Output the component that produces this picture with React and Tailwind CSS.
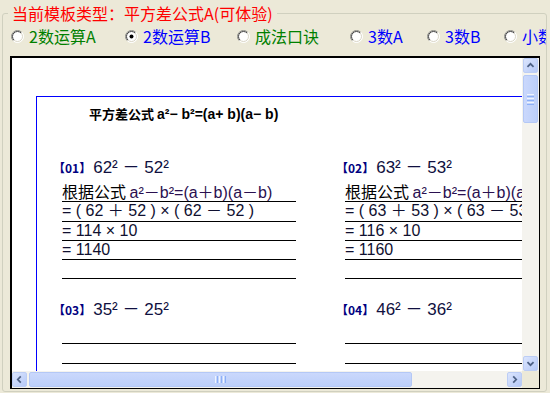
import React from 'react';

const radios = [
  { label: '2数运算A', color: 'text-[#008000]', w: 'w-[114px]', checked: false },
  { label: '2数运算B', color: 'text-[#0000FF]', w: 'w-[112px]', checked: true },
  { label: '成法口诀', color: 'text-[#008000]', w: 'w-[113px]', checked: false },
  { label: '3数A', color: 'text-[#0000FF]', w: 'w-[77px]', checked: false },
  { label: '3数B', color: 'text-[#0000FF]', w: 'w-[77px]', checked: false },
  { label: '小数运算', color: 'text-[#0000FF]', w: 'w-[120px]', checked: false },
];

const problems = [
  { n: '01', a: 62, b: 52, rows: ['= ( 62 ＋ 52 ) × ( 62 － 52 )', '= 114 × 10', '= 1140', ''], formula: true },
  { n: '02', a: 63, b: 53, rows: ['= ( 63 ＋ 53 ) × ( 63 － 53 )', '= 116 × 10', '= 1160', ''], formula: true },
  { n: '03', a: 35, b: 25, rows: ['', '', '', ''], formula: false },
  { n: '04', a: 46, b: 36, rows: ['', '', '', ''], formula: false },
];

const rowHeights = ['h-[20px]', 'h-[20px]', 'h-[19px]', 'h-[19px]', 'h-[19px]'];

function Radio({ id, checked }) {
  return (
    <svg width="13" height="13" viewBox="0 0 13 13" className="shrink-0">
      <defs>
        <linearGradient id={`ro${id}`} x1="0" y1="0" x2="1" y2="1">
          <stop offset="0.45" stopColor="#8a8a84" />
          <stop offset="0.55" stopColor="#ffffff" />
        </linearGradient>
        <linearGradient id={`ri${id}`} x1="0" y1="0" x2="1" y2="1">
          <stop offset="0.45" stopColor="#404040" />
          <stop offset="0.55" stopColor="#d8d4c4" />
        </linearGradient>
      </defs>
      <circle cx="6.5" cy="6.5" r="6" fill="#fff" stroke={`url(#ro${id})`} strokeWidth="1" />
      <circle cx="6.5" cy="6.5" r="5" fill="#fff" stroke={`url(#ri${id})`} strokeWidth="1" />
      {checked && <circle cx="6.5" cy="6.5" r="2" fill="#000" />}
    </svg>
  );
}

function ScrollBtn({ dir }) {
  const paths = {
    up: 'M4 9 L7.5 5.5 L11 9',
    down: 'M4 6 L7.5 9.5 L11 6',
    left: 'M9 4 L5.5 7.5 L9 11',
    right: 'M6 4 L9.5 7.5 L6 11',
  };
  return (
    <div className="w-[15px] h-[15px] shrink-0 rounded-[2px] border border-[#bccdf5] bg-gradient-to-br from-[#dbe5fd] to-[#b6c9f7] flex items-center justify-center">
      <svg width="15" height="15" viewBox="0 0 15 15">
        <path d={paths[dir]} fill="none" stroke="#4d6185" strokeWidth="2" />
      </svg>
    </div>
  );
}

function Problem({ p }) {
  return (
    <div className="flex flex-col">
      <div className="h-[20px] flex items-center -ml-[9px]">
        <span className="text-[12px] font-bold text-[#000080] font-['Noto_Sans_CJK_SC',sans-serif] leading-[20px]">【{p.n}】</span>
        <span className="ml-[2px] text-[17px] text-[#101040] whitespace-pre leading-[20px]">{`${p.a}² － ${p.b}²`}</span>
      </div>
      <div className="mt-[4px] w-[234px] flex flex-col">
        <div className={`${rowHeights[0]} border-b border-black leading-[19px] whitespace-pre text-[16px]`}>
          {p.formula && (
            <>
              <span className="font-['Noto_Sans_CJK_SC',sans-serif] text-black">根据公式 </span>
              <span className="text-[#2a1050]">a²－b²=(a＋b)(a－b)</span>
            </>
          )}
        </div>
        {p.rows.map((r, i) => (
          <div key={i} className={`${rowHeights[i + 1]} border-b border-black leading-[18px] whitespace-pre text-[16px] text-[#101030]`}>
            {r}
          </div>
        ))}
      </div>
    </div>
  );
}

export default function App() {
  return (
    <div className="w-[550px] h-[393px] bg-[#ECE9D8] px-[2px] overflow-hidden font-['Liberation_Sans','Noto_Sans_CJK_SC',sans-serif]">
      <fieldset className="w-[545px] h-[392px] border border-[#D0D0BF] rounded-[3px] m-0 p-0 min-w-0">
        <legend className="ml-[5px] px-[4px] text-[16px] leading-[26px] text-[#FF0000] font-['Noto_Sans_CJK_SC',sans-serif]">
          当前模板类型：平方差公式A(可体验)
        </legend>

        {/* option row */}
        <div className="-mt-[1px] h-[22px] flex items-center pl-[8px] overflow-hidden whitespace-nowrap font-['Noto_Sans_CJK_SC',sans-serif] text-[16px]">
          {radios.map((r, i) => (
            <div key={r.label} className={`${r.w} shrink-0 flex items-center gap-[5px]`}>
              <Radio id={i} checked={r.checked} />
              <span className={`${r.color} leading-[22px]`}>{r.label}</span>
            </div>
          ))}
        </div>

        {/* preview panel */}
        <div className="ml-[7px] mt-[9px] w-[530px] h-[333px] border-t-2 border-l-2 border-r border-b border-black grid grid-cols-[510px_17px] grid-rows-[313px_17px]">
          <div className="bg-white overflow-hidden">
            <div className="ml-[24px] mt-[38px] w-[900px] h-[400px] border-l border-t border-[#0000FF]">
              <div className="pl-[52px] pt-[8px] h-[26px] leading-[18px] font-bold text-black whitespace-pre">
                <span className="text-[13px] font-['Noto_Sans_CJK_SC',sans-serif]">平方差公式 </span>
                <span className="text-[14px]">a²− b²=(a+ b)(a− b)</span>
              </div>
              <div className="mt-[35px] pl-[25px] grid grid-cols-[283px_283px] gap-y-[21px]">
                {problems.map((p) => (
                  <Problem key={p.n} p={p} />
                ))}
              </div>
            </div>
          </div>

          {/* vertical scrollbar */}
          <div className="bg-[#F4F3EE] flex flex-col items-center">
            <ScrollBtn dir="up" />
            <div className="mt-[2px] w-[15px] h-[48px] rounded-[2px] border border-[#b4c8f6] bg-gradient-to-r from-[#cad8fc] to-[#bccffa] flex flex-col items-center justify-center gap-[1px]">
              <div className="w-[7px] h-[1px] bg-[#eef4fe]" />
              <div className="w-[7px] h-[1px] bg-[#8cb0f8]" />
              <div className="w-[7px] h-[1px] bg-[#eef4fe]" />
              <div className="w-[7px] h-[1px] bg-[#8cb0f8]" />
              <div className="w-[7px] h-[1px] bg-[#eef4fe]" />
              <div className="w-[7px] h-[1px] bg-[#8cb0f8]" />
            </div>
            <div className="flex-1" />
            <ScrollBtn dir="down" />
          </div>

          {/* horizontal scrollbar */}
          <div className="bg-[#F4F3EE] flex items-center">
            <ScrollBtn dir="left" />
            <div className="ml-[2px] w-[383px] h-[15px] rounded-[2px] border border-[#b4c8f6] bg-gradient-to-b from-[#cad8fc] to-[#bccffa] flex items-center justify-center gap-[1px]">
              <div className="w-[1px] h-[7px] bg-[#eef4fe]" />
              <div className="w-[1px] h-[7px] bg-[#8cb0f8]" />
              <div className="w-[1px] h-[7px] bg-[#eef4fe]" />
              <div className="w-[1px] h-[7px] bg-[#8cb0f8]" />
              <div className="w-[1px] h-[7px] bg-[#eef4fe]" />
              <div className="w-[1px] h-[7px] bg-[#8cb0f8]" />
            </div>
            <div className="flex-1" />
            <ScrollBtn dir="right" />
          </div>
          <div className="bg-[#ECE9D8]" />
        </div>
      </fieldset>
    </div>
  );
}
